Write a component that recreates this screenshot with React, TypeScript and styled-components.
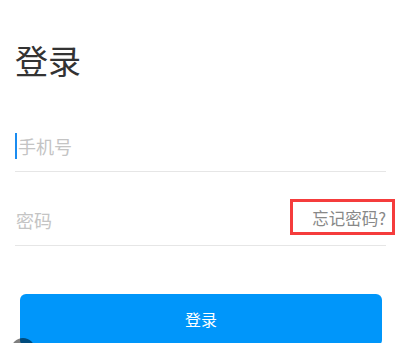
import React from "react";
import styled, { createGlobalStyle } from "styled-components";

const GlobalStyle = createGlobalStyle`
    html, body {
        margin: 0;
        padding: 0;
        background: #fff;
        overflow: hidden;
    }
    body {
        font-family: "Noto Sans CJK SC", "Noto Sans", sans-serif;
    }
`;

const Page = styled.div`
    position: relative;
    display: flex;
    flex-direction: column;
    width: 411px;
    height: 343px;
    padding: 38px 25px 0 15px;
    box-sizing: border-box;
    overflow: hidden;
`;

const Title = styled.h1`
    margin: 0 0 16px 0;
    font-size: 33px;
    line-height: 44px;
    font-weight: 400;
    color: #333;
`;

const Field = styled.div`
    display: flex;
    flex-shrink: 0;
    align-items: center;
    justify-content: space-between;
    height: 51px;
    margin-top: 22px;
    border-bottom: 1px solid #e6e6e6;
`;

const InputArea = styled.div`
    display: flex;
    align-items: center;
`;

const Caret = styled.span`
    display: block;
    width: 2px;
    height: 26px;
    margin-right: 1px;
    background: #1a8cf0;
`;

const Placeholder = styled.span<{ $indent?: boolean }>`
    font-size: 18px;
    line-height: 26px;
    color: #c4c4c4;
    padding-left: ${p => (p.$indent ? "1px" : "0")};
`;

const ForgotLink = styled.span`
    position: relative;
    font-size: 16.5px;
    line-height: 24px;
    color: #888;
    margin-top: -4px;

    &::after {
        content: "";
        position: absolute;
        left: -22px;
        right: -9px;
        top: -7px;
        bottom: -5px;
        border: 3px solid #f53c3c;
    }
`;

const SubmitButton = styled.button`
    display: block;
    flex-shrink: 0;
    height: 52px;
    margin: 48px 4px 0 5px;
    border: none;
    border-radius: 6px;
    background: #0096fa;
    color: #fff;
    font-family: inherit;
    font-size: 16px;
    padding: 0 0 2px;
`;

const FloatDot = styled.div`
    position: absolute;
    left: 11px;
    top: 338px;
    width: 24px;
    height: 24px;
    border-radius: 50%;
    background: rgba(0, 0, 0, 0.5);
`;

export default function App() {
    return (
        <Page>
            <GlobalStyle />
            <Title>登录</Title>
            <Field>
                <InputArea>
                    <Caret />
                    <Placeholder>手机号</Placeholder>
                </InputArea>
            </Field>
            <Field>
                <InputArea>
                    <Placeholder $indent>密码</Placeholder>
                </InputArea>
                <ForgotLink>忘记密码?</ForgotLink>
            </Field>
            <SubmitButton>登录</SubmitButton>
            <FloatDot />
        </Page>
    );
}
